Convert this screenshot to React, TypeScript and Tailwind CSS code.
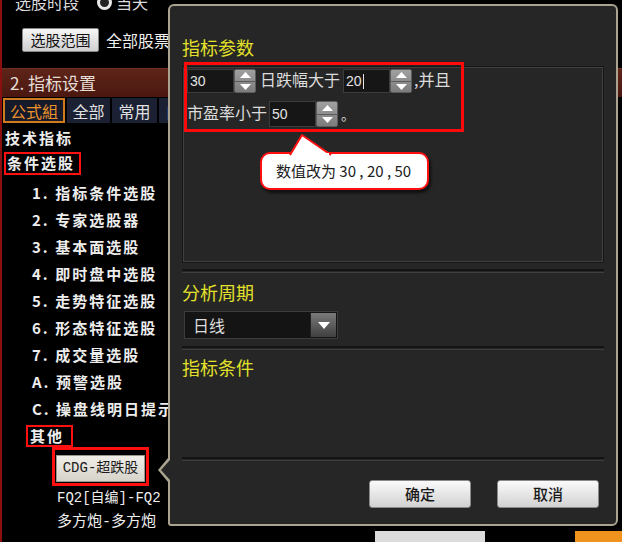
import React from "react";

const cjk = "font-['Noto_Sans_CJK_SC',sans-serif]";
const mono = "font-['Liberation_Mono','Noto_Sans_CJK_SC',monospace]";

const Up = () => (
  <svg width="11" height="6" viewBox="0 0 11 6">
    <path d="M0 6 L5.5 0 L11 6Z" fill="#fff" />
  </svg>
);
const Down = () => (
  <svg width="11" height="6" viewBox="0 0 11 6">
    <path d="M0 0 L5.5 6 L11 0Z" fill="#fff" />
  </svg>
);

const Spinner = () => (
  <div className="w-[22px] h-full flex flex-col bg-gradient-to-b from-[#a0a0a0] to-[#7c7c7c] rounded-[2px] border border-[#5c5c5c]">
    <div className="flex-1 flex items-center justify-center border-b border-[#5a5a5a]">
      <Up />
    </div>
    <div className="flex-1 flex items-center justify-center">
      <Down />
    </div>
  </div>
);

const NumInput = ({ value, caret }: { value: string; caret?: boolean }) => (
  <div className="w-[47px] h-full bg-[#161616] border border-[#3c3c3c] flex items-center pl-[2px] text-[14px] leading-none text-[#e4e4e4] font-['Liberation_Sans',sans-serif]">
    {value}
    {caret && <span className="inline-block w-[1px] h-[15px] bg-[#e4e4e4] ml-[1px]" />}
  </div>
);

const Sep = () => (
  <div className="h-[4px] border-t-2 border-t-[#141414] border-b border-b-[#3e3e3e]" />
);

const items = [
  "1. 指标条件选股",
  "2. 专家选股器",
  "3. 基本面选股",
  "4. 即时盘中选股",
  "5. 走势特征选股",
  "6. 形态特征选股",
  "7. 成交量选股",
  "A. 预警选股",
  "C. 操盘线明日提示",
];

export default function App() {
  return (
    <div className={`relative w-[622px] h-[542px] overflow-hidden bg-black ${cjk}`}>
      {/* background panel */}
      <div className="w-full h-full flex flex-col border-l-2 border-[#8a1010]">
        <div className="h-[68px] flex flex-col">
          <div className="-mt-[8px] h-[20px] flex items-center pl-[13px] text-[16px] text-[#dcdcdc]">
            <span>选股时段</span>
            <span className="ml-[18px] w-[15px] h-[15px] rounded-full border-[3px] border-[#e8e8e8] bg-[#222]" />
            <span className="ml-[4px]">当天</span>
          </div>
          <div className="mt-[16px] h-[24px] flex items-center">
            <div className="ml-[20px] w-[77px] h-[24px] flex items-center justify-center rounded-[2px] border border-[#888] bg-gradient-to-b from-[#f6f6f6] to-[#cfcfcf] text-[15px] text-[#111]">
              选股范围
            </div>
            <span className="ml-[7px] text-[16px] text-[#f0f0f0]">全部股票</span>
          </div>
        </div>
        <div className="h-[29px] flex items-center pl-[8px] text-[17px] text-[#e6ddd6] bg-gradient-to-b from-[#5e2418] to-[#4a1810] border-t border-[#6e3022]">
          2. 指标设置
        </div>
        <div className="mt-[1px] h-[25px] flex gap-[2px] pl-[1px] text-[16px]">
          <div className="w-[62px] flex items-center justify-center border-2 border-[#d07a1e] bg-[#151a2a] text-[#ec922c]">
            公式組
          </div>
          <div className="w-[43px] flex items-center justify-center bg-[#1b2132] text-[#e0e0e0]">全部</div>
          <div className="w-[45px] flex items-center justify-center bg-[#1b2132] text-[#e0e0e0]">常用</div>
          <div className="w-[45px] flex items-center justify-center bg-[#1b2132] text-[#e0e0e0]">自编</div>
        </div>
        <div className="pt-[2px] flex flex-col text-[15px] font-bold text-[#ededed]">
          <div className="h-[27px] flex items-center pl-[3px] tracking-[2px]">技术指标</div>
          <div className="h-[23px] w-[77px] ml-[2px] flex items-center pl-[1px] border-2 border-[#ff1010] tracking-[2px]">
            条件选股
          </div>
          <div className="h-[5px]" />
          {items.map((t) => (
            <div key={t} className="h-[27px] flex items-center pl-[30px] tracking-[2px] whitespace-nowrap">
              {t}
            </div>
          ))}
          <div className="mt-[2px] h-[22px] w-[47px] ml-[24px] flex items-center pl-[2px] border-2 border-[#ff1010] tracking-[2px]">
            其他
          </div>
          <div className="h-[39px] w-[97px] ml-[50px] border-[3px] border-[#ff1010] flex items-end pb-[1px] px-[1px]">
            <div className={`w-full h-[27px] flex items-center justify-center bg-gradient-to-b from-[#f0eee8] to-[#d6d3ca] border border-[#9a968c] text-[#1a1a1a] text-[14px] font-normal ${mono}`}>
              CDG-超跌股
            </div>
          </div>
          <div className={`h-[24px] flex items-center pl-[55px] text-[14px] font-normal whitespace-nowrap ${mono}`}>
            FQ2[自编]-FQ2
          </div>
          <div className="h-[32px] flex">
            <div className={`h-[26px] w-[110px] flex items-center ml-[55px] text-[15px] font-normal whitespace-nowrap ${mono}`}>
              多方炮-多方炮
            </div>
            <div className="self-end ml-[208px] w-[110px] h-[11px] bg-[#dcdcdc]" />
            <div className="self-end ml-[90px] w-[47px] h-[11px] bg-[#f0921e]" />
          </div>
        </div>
      </div>

      {/* dialog */}
      <div className="absolute left-[168px] top-[4px] w-[450px] h-[522px] bg-[#262626] border-2 border-[#aaa390] rounded-tl-[6px] rounded-tr-[6px] rounded-br-[6px] rounded-bl-[3px] flex flex-col px-[12px]">
        {/* pointer */}
        <div className="absolute left-[-12px] top-[452px] w-0 h-0 border-y-[12px] border-y-transparent border-r-[10px] border-r-[#aaa390]" />
        <div className="absolute left-[-9px] top-[454px] w-0 h-0 border-y-[10px] border-y-transparent border-r-[9px] border-r-[#262626]" />

        <div className="mt-[29px] h-[24px] flex items-center text-[18px] text-[#e3e02a]">指标参数</div>
        <div className="mt-[7px] h-[197px] border border-[#161616] shadow-[inset_0_0_0_1px_#404040] p-[1px]">
          <div className="-mt-[6px] w-[280px] h-[70px] border-[3px] border-[#ff0a0a] flex flex-col text-[16px] leading-none text-[#dcdcdc]">
            <div className="mt-[4px] h-[24px] flex items-center">
              <NumInput value="30" />
              <Spinner />
              <span className="ml-[4px] w-[80px] -mt-[4px]">日跌幅大于</span>
              <span className="ml-[3px] h-full flex">
                <NumInput value="20" caret />
                <Spinner />
              </span>
              <span className="ml-[2px] -mt-[4px]">,并且</span>
            </div>
            <div className="mt-[8px] h-[26px] flex items-center">
              <span className="w-[80px] -mt-[4px]">市盈率小于</span>
              <span className="ml-[2px] h-full flex">
                <NumInput value="50" />
                <Spinner />
              </span>
              <span className="ml-[3px] text-[14px]">。</span>
            </div>
          </div>
        </div>
        <div className="mt-[6px]">
          <Sep />
        </div>
        <div className="mt-[7px] h-[24px] flex items-center text-[18px] text-[#e3e02a]">分析周期</div>
        <div className="mt-[7px] ml-[2px] w-[154px] h-[28px] flex border border-[#3c3c3c] bg-[#141414] p-[1px]">
          <div className="flex-1 flex items-center pl-[7px] text-[16px] text-[#dcdcdc]">日线</div>
          <div className="w-[26px] flex items-center justify-center bg-gradient-to-b from-[#7a7a7a] to-[#404040] border-l border-[#222]">
            <svg width="12" height="7" viewBox="0 0 12 7">
              <path d="M0 0 L6 7 L12 0Z" fill="#fff" />
            </svg>
          </div>
        </div>
        <div className="mt-[7px]">
          <Sep />
        </div>
        <div className="mt-[5px] h-[24px] flex items-center text-[18px] text-[#e3e02a]">指标条件</div>
        <div className="mt-[78px]">
          <Sep />
        </div>
        <div className="mt-[19px] flex justify-end gap-[26px] pr-[5px]">
          <div className="w-[102px] h-[28px] flex items-center justify-center rounded-[3px] border border-[#8a8a8a] bg-gradient-to-b from-[#fafafa] to-[#d2d2d2] text-[15px] font-medium text-[#1a1a1a]">
            确定
          </div>
          <div className="w-[102px] h-[28px] flex items-center justify-center rounded-[3px] border border-[#8a8a8a] bg-gradient-to-b from-[#fafafa] to-[#d2d2d2] text-[15px] font-medium text-[#1a1a1a]">
            取消
          </div>
        </div>

        {/* callout */}
        <div className="absolute left-[90px] top-[146px] w-[169px] h-[38px] rounded-[10px] bg-white border-2 border-[#ff1010] shadow-[2px_3px_3px_rgba(0,0,0,0.6)] flex items-center pl-[14px] text-[15px] text-[#202020] whitespace-nowrap">
          数值改为 30 , 20 , 50
        </div>
        <svg className="absolute left-[119px] top-[127px]" width="44" height="23" viewBox="0 0 44 23">
          <path d="M1 22 L13 2 L42 22" fill="#fff" stroke="#ff1010" strokeWidth="2" strokeLinejoin="round" />
          <rect x="3" y="20" width="37" height="3" fill="#fff" />
        </svg>
      </div>
    </div>
  );
}
